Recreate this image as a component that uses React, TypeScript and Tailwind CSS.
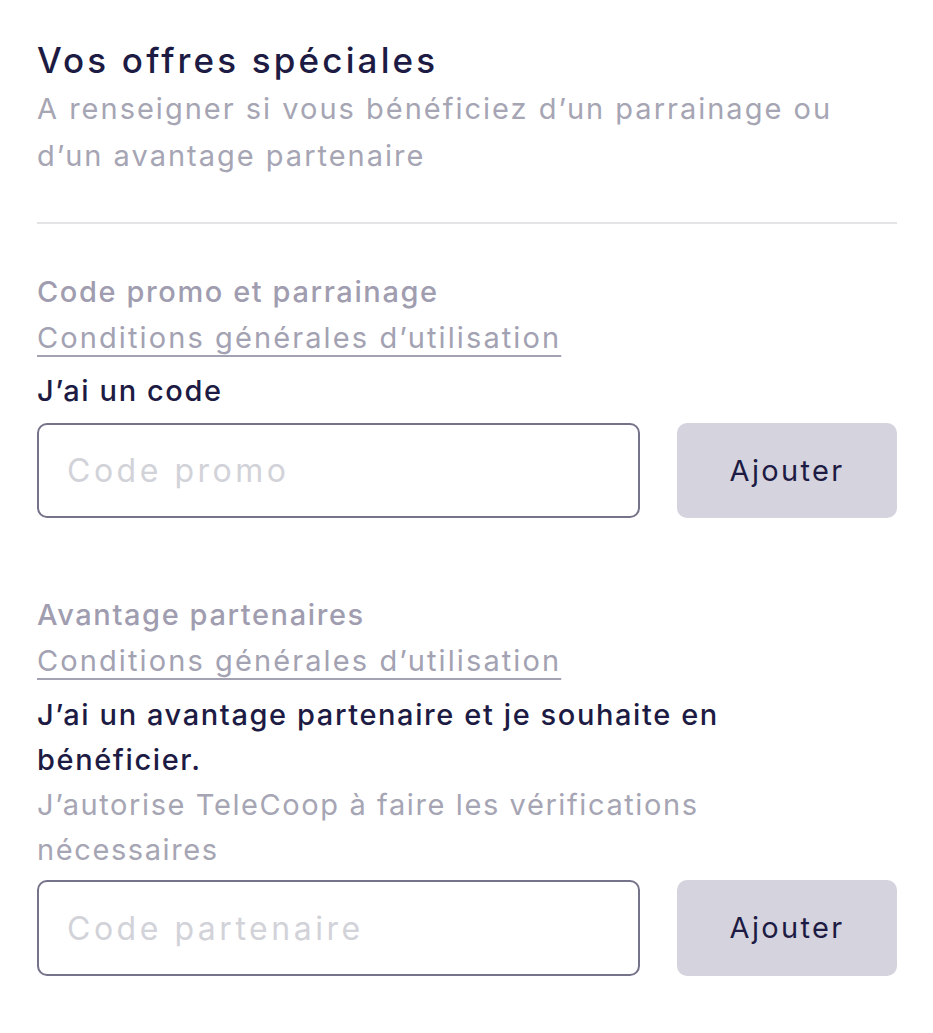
export default function App() {
  return (
    <div
      className="min-h-screen bg-white px-[37px] pt-[38px] tracking-[1.6px]"
      style={{ fontFamily: "Inter, 'Noto Sans', sans-serif" }}
    >
      <div className="w-[860px]">
        <h1 className="text-[35px] font-medium leading-[44px] tracking-[0.09em] text-[#1d1b43]">
          Vos offres spéciales
        </h1>
        <p className="mt-[3px] w-[840px] text-[29px] leading-[47px] tracking-[2px] text-[#a6a5b4]">
          A renseigner si vous bénéficiez d’un parrainage ou d’un avantage
          partenaire
        </p>

        <div className="mt-[43px] h-[2px] bg-[#e4e4e7]" />

        <section className="mt-[45px]">
          <p className="text-[29px] font-medium leading-[46px] text-[#9f9daf]">
            Code promo et parrainage
          </p>
          <a
            href="#"
            className="block text-[29px] leading-[46px] tracking-[2.1px] text-[#a3a2b2] underline decoration-[2px] underline-offset-[7px]"
          >
            Conditions générales d’utilisation
          </a>
          <p className="mt-[7px] text-[29px] font-medium leading-[46px] text-[#1d1b43]">
            J’ai un code
          </p>
          <div className="mt-[9px] flex gap-[37px]">
            <input
              placeholder="Code promo"
              className="h-[95px] w-[603px] rounded-[10px] border-2 border-[#74738a] px-[28px] text-[32px] tracking-[0.11em] text-[#1d1b43] outline-none placeholder:text-[#d2d2d9]"
            />
            <button className="h-[95px] flex-1 rounded-[10px] bg-[#d4d3de] text-[29px] tracking-[0.08em] text-[#1d1b43]">
              Ajouter
            </button>
          </div>
        </section>

        <section className="mt-[74px]">
          <p className="text-[29px] font-medium leading-[46px] text-[#9f9daf]">
            Avantage partenaires
          </p>
          <a
            href="#"
            className="block text-[29px] leading-[46px] tracking-[2.1px] text-[#a3a2b2] underline decoration-[2px] underline-offset-[7px]"
          >
            Conditions générales d’utilisation
          </a>
          <p className="mt-[8px] w-[790px] text-[29px] font-medium leading-[45px] text-[#1d1b43]">
            J’ai un avantage partenaire et je souhaite en bénéficier.
          </p>
          <p className="w-[790px] text-[29px] leading-[45px] text-[#a6a5b4]">
            J’autorise TeleCoop à faire les vérifications nécessaires
          </p>
          <div className="mt-[8px] flex gap-[37px]">
            <input
              placeholder="Code partenaire"
              className="h-[96px] w-[603px] rounded-[10px] border-2 border-[#74738a] px-[28px] text-[32px] tracking-[0.11em] text-[#1d1b43] outline-none placeholder:text-[#d2d2d9]"
            />
            <button className="h-[96px] flex-1 rounded-[10px] bg-[#d4d3de] text-[29px] tracking-[0.08em] text-[#1d1b43]">
              Ajouter
            </button>
          </div>
        </section>
      </div>
    </div>
  );
}
